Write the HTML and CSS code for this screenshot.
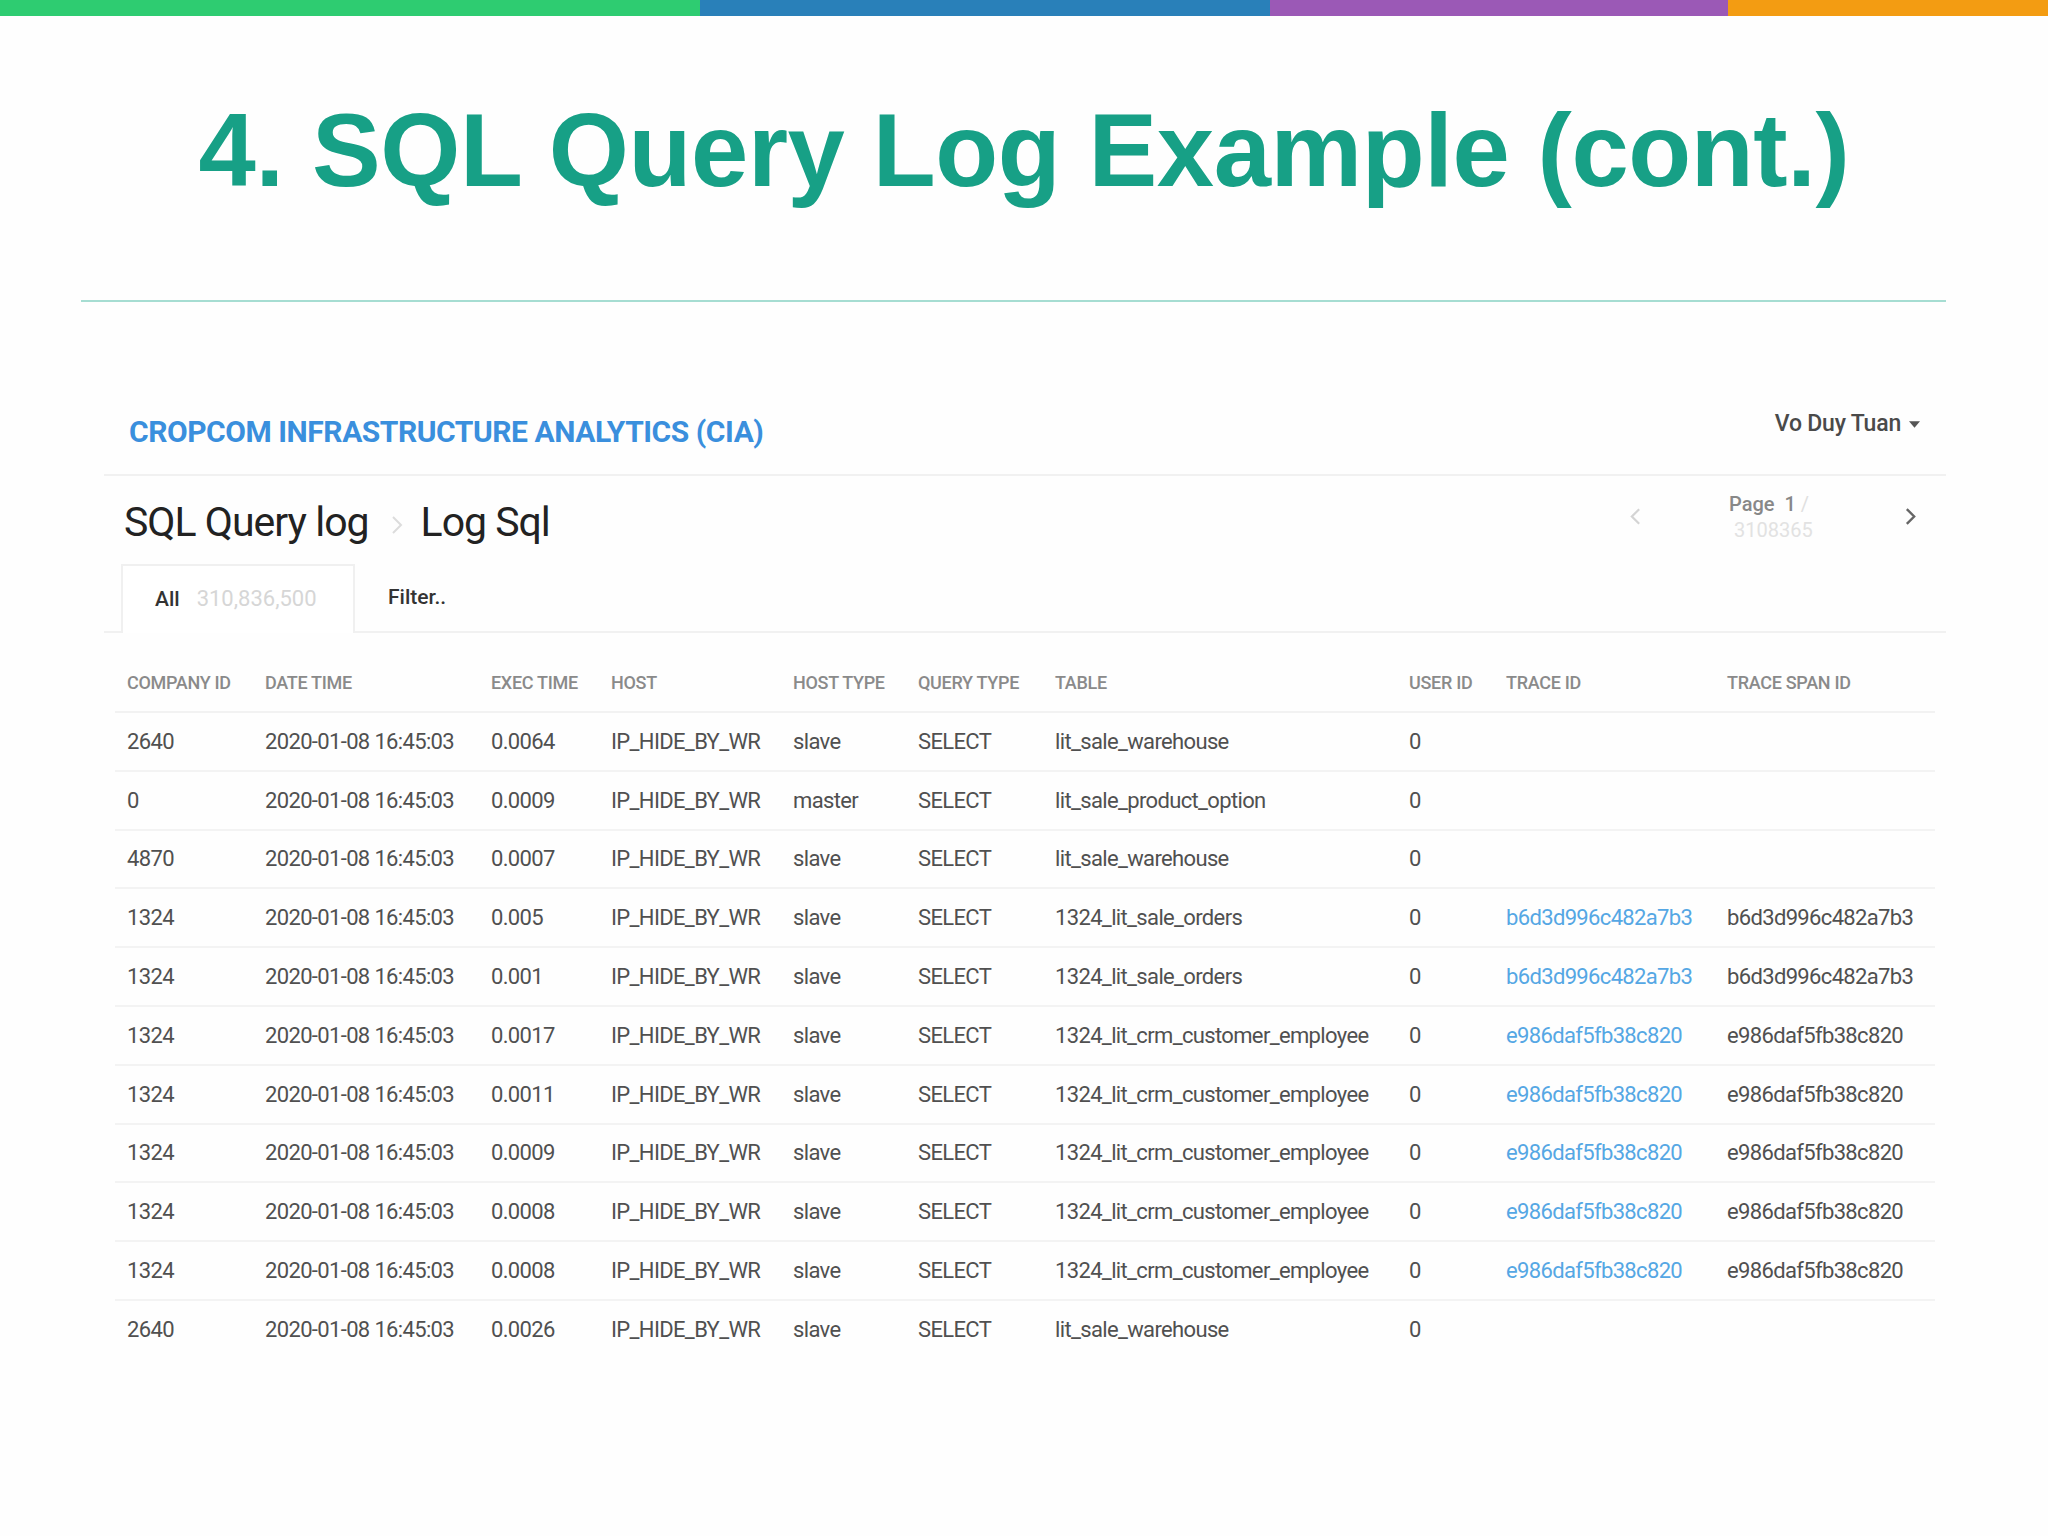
FILE: index.html
```html
<!DOCTYPE html>
<html lang="en">
<head>
<meta charset="utf-8">
<title>4. SQL Query Log Example (cont.)</title>
<link rel="stylesheet" href="styles.css">
</head>
<body>
<div class="slide">
  <div class="topbar">
    <span class="seg seg-green"></span>
    <span class="seg seg-blue"></span>
    <span class="seg seg-purple"></span>
    <span class="seg seg-orange"></span>
  </div>
  <h1 class="title">4. SQL Query Log Example (cont.)</h1>
  <div class="rule"></div>

  <div class="app">
    <div class="app-header">
      <div class="brand">CROPCOM INFRASTRUCTURE ANALYTICS (CIA)</div>
      <div class="user">Vo Duy Tuan
        <svg class="caret" viewBox="0 0 10 6" width="11" height="7"><path d="M0 0 L10 0 L5 6 Z" fill="#555"/></svg>
      </div>
    </div>

    <div class="subhead">
      <div class="crumbs">
        <span class="crumb">SQL Query log</span>
        <svg class="crumb-sep" viewBox="0 0 12 20" width="12" height="22"><path d="M2 2 L10 10 L2 18" fill="none" stroke="#dcdcdc" stroke-width="2"/></svg>
        <span class="crumb">Log Sql</span>
      </div>
      <div class="pager">
        <svg class="pg-prev" viewBox="0 0 12 20" width="11" height="19"><path d="M10 2 L2 10 L10 18" fill="none" stroke="#d4d4d4" stroke-width="2.4"/></svg>
        <div class="pg-text"><span class="pg-label">Page&nbsp; 1</span> <span class="pg-slash">/</span><br><span class="pg-total">3108365</span></div>
        <svg class="pg-next" viewBox="0 0 12 20" width="11" height="19"><path d="M2 2 L10 10 L2 18" fill="none" stroke="#666" stroke-width="2.6"/></svg>
      </div>
    </div>

    <div class="tabs">
      <div class="tab tab-active"><span class="tab-name">All</span><span class="tab-count">310,836,500</span></div>
      <div class="tab"><span class="tab-name">Filter..</span></div>
    </div>

    <table class="log">
      <colgroup>
        <col class="w1"><col class="w2"><col class="w3"><col class="w4"><col class="w5">
        <col class="w6"><col class="w7"><col class="w8"><col class="w9"><col class="w10">
      </colgroup>
      <thead>
        <tr>
          <th>Company ID</th><th>Date Time</th><th>Exec Time</th><th>Host</th><th>Host Type</th>
          <th>Query Type</th><th>Table</th><th>User ID</th><th>Trace ID</th><th>Trace Span ID</th>
        </tr>
      </thead>
      <tbody>
        <tr><td>2640</td><td>2020-01-08 16:45:03</td><td>0.0064</td><td>IP_HIDE_BY_WR</td><td>slave</td><td>SELECT</td><td>lit_sale_warehouse</td><td>0</td><td></td><td></td></tr>
        <tr><td>0</td><td>2020-01-08 16:45:03</td><td>0.0009</td><td>IP_HIDE_BY_WR</td><td>master</td><td>SELECT</td><td>lit_sale_product_option</td><td>0</td><td></td><td></td></tr>
        <tr><td>4870</td><td>2020-01-08 16:45:03</td><td>0.0007</td><td>IP_HIDE_BY_WR</td><td>slave</td><td>SELECT</td><td>lit_sale_warehouse</td><td>0</td><td></td><td></td></tr>
        <tr><td>1324</td><td>2020-01-08 16:45:03</td><td>0.005</td><td>IP_HIDE_BY_WR</td><td>slave</td><td>SELECT</td><td>1324_lit_sale_orders</td><td>0</td><td class="link">b6d3d996c482a7b3</td><td>b6d3d996c482a7b3</td></tr>
        <tr><td>1324</td><td>2020-01-08 16:45:03</td><td>0.001</td><td>IP_HIDE_BY_WR</td><td>slave</td><td>SELECT</td><td>1324_lit_sale_orders</td><td>0</td><td class="link">b6d3d996c482a7b3</td><td>b6d3d996c482a7b3</td></tr>
        <tr><td>1324</td><td>2020-01-08 16:45:03</td><td>0.0017</td><td>IP_HIDE_BY_WR</td><td>slave</td><td>SELECT</td><td>1324_lit_crm_customer_employee</td><td>0</td><td class="link">e986daf5fb38c820</td><td>e986daf5fb38c820</td></tr>
        <tr><td>1324</td><td>2020-01-08 16:45:03</td><td>0.0011</td><td>IP_HIDE_BY_WR</td><td>slave</td><td>SELECT</td><td>1324_lit_crm_customer_employee</td><td>0</td><td class="link">e986daf5fb38c820</td><td>e986daf5fb38c820</td></tr>
        <tr><td>1324</td><td>2020-01-08 16:45:03</td><td>0.0009</td><td>IP_HIDE_BY_WR</td><td>slave</td><td>SELECT</td><td>1324_lit_crm_customer_employee</td><td>0</td><td class="link">e986daf5fb38c820</td><td>e986daf5fb38c820</td></tr>
        <tr><td>1324</td><td>2020-01-08 16:45:03</td><td>0.0008</td><td>IP_HIDE_BY_WR</td><td>slave</td><td>SELECT</td><td>1324_lit_crm_customer_employee</td><td>0</td><td class="link">e986daf5fb38c820</td><td>e986daf5fb38c820</td></tr>
        <tr><td>1324</td><td>2020-01-08 16:45:03</td><td>0.0008</td><td>IP_HIDE_BY_WR</td><td>slave</td><td>SELECT</td><td>1324_lit_crm_customer_employee</td><td>0</td><td class="link">e986daf5fb38c820</td><td>e986daf5fb38c820</td></tr>
        <tr class="last"><td>2640</td><td>2020-01-08 16:45:03</td><td>0.0026</td><td>IP_HIDE_BY_WR</td><td>slave</td><td>SELECT</td><td>lit_sale_warehouse</td><td>0</td><td></td><td></td></tr>
      </tbody>
    </table>
  </div>
</div>
</body>
</html>
```

FILE: styles.css
```css
* { box-sizing: border-box; }

html, body {
  margin: 0;
  padding: 0;
  background: #ffffff;
}

body {
  font-family: Roboto, "Liberation Sans", sans-serif;
  color: #333;
}

.slide {
  width: 2048px;
  height: 1536px;
  overflow: hidden;
  background: #fefefe;
}

/* colour strip */
.topbar {
  display: flex;
  height: 16px;
}
.seg { display: block; height: 100%; }
.seg-green  { width: 700px; background: #2ecc71; }
.seg-blue   { width: 570px; background: #2980b9; }
.seg-purple { width: 458px; background: #9b59b6; }
.seg-orange { flex: 1; background: #f39c12; }

.title {
  margin: 75px 0 0 0;
  font-family: "Liberation Sans", Arial, sans-serif;
  font-weight: 700;
  font-size: 103px;
  line-height: 120px;
  color: #17a086;
  text-align: center;
  letter-spacing: -0.4px;
}

.rule {
  margin: 89px 0 0 81px;
  width: 1865px;
  height: 2px;
  background: #a6ddd2;
}

/* embedded app screenshot */
.app {
  margin: 88px 0 0 104px;
  width: 1842px;
}

.app-header {
  height: 86px;
  display: flex;
  align-items: center;
  justify-content: space-between;
  padding: 0 26px 0 25px;
  border-bottom: 2px solid #f1f1f1;
}

.brand {
  font-weight: 700;
  font-size: 30px;
  letter-spacing: -0.45px;
  color: #3a8fdd;
  padding-bottom: 2px;
}

.user {
  display: flex;
  align-items: center;
  gap: 8px;
  font-weight: 500;
  font-size: 23px;
  letter-spacing: -0.2px;
  color: #4a4a4a;
  padding-bottom: 18px;
}
.caret { margin-top: 2px; }

.subhead {
  height: 88px;
  display: flex;
  align-items: center;
  justify-content: space-between;
  padding: 0 30px 0 20px;
}

.crumbs {
  display: flex;
  align-items: center;
  gap: 16px;
  padding-top: 4px;
}
.crumb {
  font-size: 41px;
  letter-spacing: -1px;
  color: #222;
  line-height: 1;
}
.crumb-sep { margin: 6px 2px 0 6px; }

.pager {
  display: flex;
  align-items: center;
}
.pg-prev { margin-right: 88px; margin-top: -8px; }
.pg-text {
  font-size: 20px;
  line-height: 26px;
  width: 90px;
  margin-top: -6px;
}
.pg-label { color: #888; font-weight: 500; }
.pg-slash { color: #e0e0e0; }
.pg-total { color: #e2e2e2; padding-left: 5px; }
.pg-next { margin-left: 86px; margin-top: -8px; }

.tabs {
  display: flex;
  align-items: stretch;
  height: 69px;
  padding-left: 17px;
  border-bottom: 2px solid #f1f1f1;
}
.tab {
  display: flex;
  align-items: center;
  padding: 0 33px 2px 33px;
  font-size: 21px;
  font-weight: 500;
  color: #333;
}
.tab-active {
  width: 234px;
  background: #fff;
  border: 2px solid #f0f0f0;
  border-bottom: none;
  margin-bottom: -2px;
  padding-left: 32px;
}
.tab-count {
  margin-left: 17px;
  font-weight: 400;
  font-size: 22px;
  color: #d6d6d6;
}

/* table */
.log {
  margin: 21px 0 0 11px;
  width: 1820px;
  border-collapse: collapse;
  table-layout: fixed;
}
.w1 { width: 138px; }
.w2 { width: 226px; }
.w3 { width: 120px; }
.w4 { width: 182px; }
.w5 { width: 125px; }
.w6 { width: 137px; }
.w7 { width: 354px; }
.w8 { width: 97px; }
.w9 { width: 221px; }
.w10 { width: 220px; }

.log th {
  height: 58px;
  padding: 0 0 0 12px;
  text-align: left;
  font-weight: 500;
  font-size: 18px;
  letter-spacing: -0.3px;
  text-transform: uppercase;
  color: #8a8a8a;
  border-bottom: 2px solid #f2f2f2;
  white-space: nowrap;
}

.log td {
  height: 58.8px;
  padding: 0 0 0 12px;
  font-size: 22px;
  letter-spacing: -0.65px;
  color: #505050;
  border-bottom: 2px solid #f3f3f3;
  white-space: nowrap;
  overflow: hidden;
}
.log tr.last td { border-bottom: none; }
.log td.link { color: #55a7e4; }
```
